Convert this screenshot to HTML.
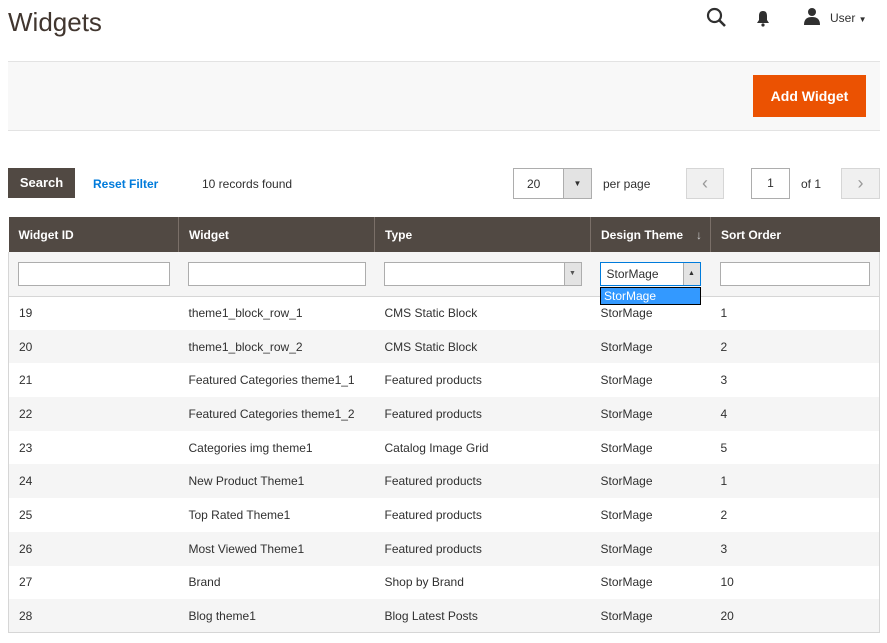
<!DOCTYPE html><html><head><style>
*{box-sizing:border-box;margin:0;padding:0}
body{width:887px;height:643px;background:#fff;font-family:"Liberation Sans",sans-serif;color:#303030;font-size:12px;position:relative;overflow:hidden}
.a{position:absolute}
h1{position:absolute;left:8px;top:7px;font-weight:normal;font-size:26px;color:#41362f}
.bar{left:8px;top:61px;width:872px;height:70px;background:#f8f8f8;border-top:1px solid #e3e3e3;border-bottom:1px solid #e3e3e3}
.btn{left:753px;top:75px;width:113px;height:42px;background:#eb5202;color:#fff;font-weight:bold;font-size:14px;text-align:center;line-height:42px}
.sb{left:8px;top:168px;width:67px;height:30px;background:#514943;color:#fff;font-weight:bold;text-align:center;line-height:30px;font-size:13px}
.box{border:1px solid #adadad;background:#fff}
table{position:absolute;left:8px;top:217px;width:872px;border-collapse:collapse}
th{background:#514943;color:#fff;text-align:left;font-weight:bold;height:35px;padding-left:10px;border-left:1px solid #7a6f68;font-size:12px}
th:first-child{border-left:none}
.f td{background:#f5f5f5;height:44px;padding:0 9px;border-bottom:1px solid #d6d6d6}
.f .in{height:24px;border:1px solid #adadad;background:#fff;position:relative}
tbody tr.r td{height:33.7px;padding-left:10px}
tbody tr.r:nth-child(odd) td{background:#f5f5f5}
td:first-child{border-left:1px solid #d6d6d6}td:last-child{border-right:1px solid #d6d6d6}
tr.last td{border-bottom:1px solid #d6d6d6}
</style></head><body>
<h1>Widgets</h1>
<svg class="a" style="left:706px;top:7px" width="22" height="22" viewBox="0 0 22 22"><circle cx="8.5" cy="8.5" r="6.5" fill="none" stroke="#303030" stroke-width="2.2"/><path d="M13 13l6 6" stroke="#303030" stroke-width="2.6"/></svg>
<svg class="a" style="left:756px;top:10px" width="14" height="17" viewBox="0 0 14 17"><path d="M7 1c-3 0-4 2-4 5v4l-2 3h12l-2-3V6c0-3-1-5-4-5z" fill="#303030"/><circle cx="7" cy="15" r="1.6" fill="#303030"/></svg>
<svg class="a" style="left:803px;top:7px" width="18" height="18" viewBox="0 0 18 18"><circle cx="9" cy="5" r="4" fill="#303030"/><path d="M1 18c0-6 3-8 8-8s8 2 8 8z" fill="#303030"/></svg>
<div class="a" style="left:830px;top:11px;font-size:12px">User <span style="font-size:8px">▼</span></div>
<div class="a bar"></div>
<div class="a btn">Add Widget</div>
<div class="a sb">Search</div>
<div class="a" style="left:93px;top:177px;color:#007bdb;font-weight:bold">Reset Filter</div>
<div class="a" style="left:202px;top:177px">10 records found</div>
<div class="a box" style="left:513px;top:168px;width:79px;height:31px"><span class="a" style="left:13px;top:8px">20</span><div class="a" style="left:49px;top:0;width:28px;height:29px;background:#e3e3e3;border-left:1px solid #adadad;text-align:center;line-height:29px;font-size:8px">▼</div></div>
<div class="a" style="left:603px;top:177px">per page</div>
<div class="a" style="left:686px;top:168px;width:38px;height:31px;background:#f0f0f0;border:1px solid #d6d6d6;color:#999;text-align:center;line-height:28px;font-size:18px">&#8249;</div>
<div class="a box" style="left:751px;top:168px;width:39px;height:31px;text-align:center;line-height:29px">1</div>
<div class="a" style="left:801px;top:177px">of 1</div>
<div class="a" style="left:841px;top:168px;width:39px;height:31px;background:#f0f0f0;border:1px solid #d6d6d6;color:#999;text-align:center;line-height:28px;font-size:18px">&#8250;</div>
<table>
<thead><tr><th style="width:170px">Widget ID</th><th style="width:196px">Widget</th><th style="width:216px">Type</th><th style="width:120px">Design Theme <span style="float:right;margin-right:8px;font-weight:normal;color:#ccc">↓</span></th><th>Sort Order</th></tr></thead>
<tbody>
<tr class="f"><td><div class="in"></div></td><td><div class="in"></div></td><td><div class="in"><div class="a" style="right:0;top:0;width:17px;height:22px;background:#e3e3e3;border-left:1px solid #adadad;font-size:7px;text-align:center;line-height:22px;color:#555">▼</div></div></td><td><div class="in" style="border-color:#007bdb;width:101px;margin-left:0;left:0"><span class="a" style="left:6px;top:4px">StorMage</span><div class="a" style="right:0;top:0;width:17px;height:22px;background:#e3e3e3;border-left:1px solid #adadad;font-size:7px;text-align:center;line-height:22px">▲</div></div></td><td><div class="in"></div></td></tr>
<tr class="r"><td>19</td><td>theme1_block_row_1</td><td>CMS Static Block</td><td>StorMage</td><td>1</td></tr>
<tr class="r"><td>20</td><td>theme1_block_row_2</td><td>CMS Static Block</td><td>StorMage</td><td>2</td></tr>
<tr class="r"><td>21</td><td>Featured Categories theme1_1</td><td>Featured products</td><td>StorMage</td><td>3</td></tr>
<tr class="r"><td>22</td><td>Featured Categories theme1_2</td><td>Featured products</td><td>StorMage</td><td>4</td></tr>
<tr class="r"><td>23</td><td>Categories img theme1</td><td>Catalog Image Grid</td><td>StorMage</td><td>5</td></tr>
<tr class="r"><td>24</td><td>New Product Theme1</td><td>Featured products</td><td>StorMage</td><td>1</td></tr>
<tr class="r"><td>25</td><td>Top Rated Theme1</td><td>Featured products</td><td>StorMage</td><td>2</td></tr>
<tr class="r"><td>26</td><td>Most Viewed Theme1</td><td>Featured products</td><td>StorMage</td><td>3</td></tr>
<tr class="r"><td>27</td><td>Brand</td><td>Shop by Brand</td><td>StorMage</td><td>10</td></tr>
<tr class="r last"><td>28</td><td>Blog theme1</td><td>Blog Latest Posts</td><td>StorMage</td><td>20</td></tr>
</tbody></table>
<div class="a" style="left:600px;top:287px;width:101px;height:18px;background:#3399ff;border:1px solid #000;color:#fff;padding-left:3px;line-height:16px">StorMage</div>
</body></html>
